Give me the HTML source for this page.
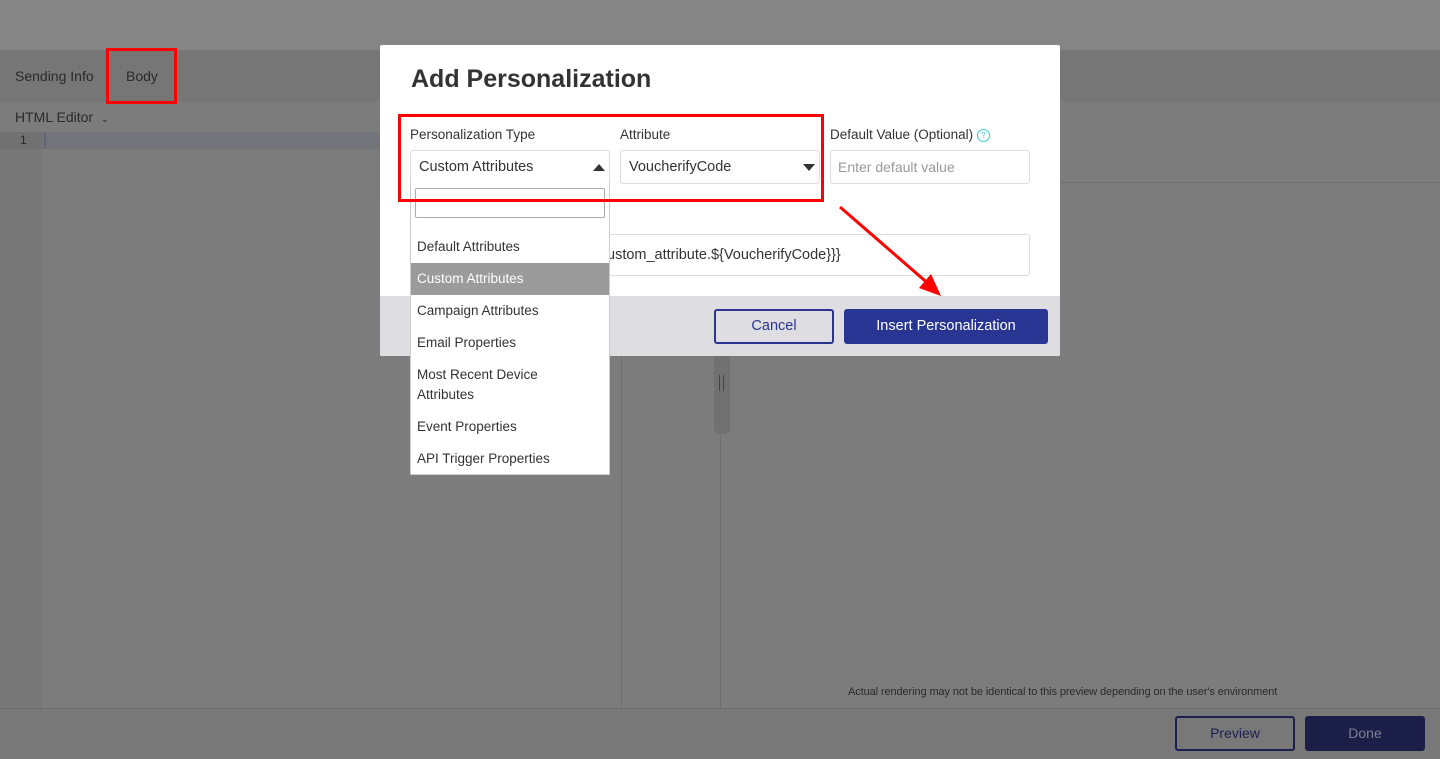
<!DOCTYPE html>
<html><head><meta charset="utf-8"><style>
*{box-sizing:border-box;margin:0;padding:0}
body{width:1440px;height:759px;position:relative;overflow:hidden;background:#7c7c7c;font-family:"Liberation Sans",sans-serif;color:#222}
.a{position:absolute}
</style></head><body>
<div class="a" style="left:0;top:0;width:1440px;height:50px;background:#858585"></div>
<div class="a" style="left:0;top:50px;width:1440px;height:52px;background:#767676"></div>
<div class="a" style="left:15px;top:68px;font-size:14px;color:#2a2a2a">Sending Info</div>
<div class="a" style="left:126px;top:68px;font-size:14px;color:#2a2a2a">Body</div>
<div class="a" style="left:106px;top:48px;width:71px;height:56px;border:3px solid #f00"></div>
<div class="a" style="left:15px;top:109px;font-size:14px;color:#2a2a2a">HTML Editor &nbsp;<span style="font-size:10px">⌄</span></div>
<div class="a" style="left:0;top:132px;width:42px;height:577px;background:#777"></div>
<div class="a" style="left:0;top:132px;width:42px;height:17px;background:#717171"></div>
<div class="a" style="left:42px;top:132px;width:580px;height:17px;background:#727479"></div>
<div class="a" style="left:44px;top:132px;width:2px;height:17px;background:#63666b"></div>
<div class="a" style="left:20px;top:133px;font-size:12px;color:#2a2a2a">1</div>
<div class="a" style="left:621px;top:340px;width:1px;height:369px;background:#6e6e6e"></div>
<div class="a" style="left:720px;top:182px;width:1px;height:527px;background:#6e6e6e"></div>
<div class="a" style="left:1060px;top:182px;width:380px;height:1px;background:#6e6e6e"></div>
<div class="a" style="left:714px;top:356px;width:16px;height:78px;background:#717171;border-radius:0 0 5px 5px"></div>
<div class="a" style="left:719px;top:375px;width:1px;height:16px;background:#444"></div>
<div class="a" style="left:723px;top:375px;width:1px;height:16px;background:#444"></div>
<div class="a" style="left:848px;top:686px;font-size:11px;color:#2a2a2a;letter-spacing:-0.1px">Actual rendering may not be identical to this preview depending on the user's environment</div>
<div class="a" style="left:0;top:708px;width:1440px;height:51px;background:#787878;border-top:1px solid #6c6c6c"></div>
<div class="a" style="left:1175px;top:716px;width:120px;height:35px;border:2px solid #1c2050;border-radius:3px;color:#1c2050;font-size:14px;text-align:center;line-height:31px">Preview</div>
<div class="a" style="left:1305px;top:716px;width:120px;height:35px;background:#1c2049;border-radius:3px;color:#7d7e95;font-size:14px;text-align:center;line-height:35px">Done</div>

<div class="a" style="left:380px;top:45px;width:680px;height:311px;background:#fff;border-radius:2px;overflow:hidden">
<div class="a" style="left:31px;top:20px;font-size:25px;font-weight:bold;color:#333">Add Personalization</div>
<div class="a" style="left:30px;top:82px;font-size:13.5px;color:#333">Personalization Type</div>
<div class="a" style="left:240px;top:82px;font-size:13.5px;color:#333">Attribute</div>
<div class="a" style="left:450px;top:82px;font-size:13.5px;color:#333">Default Value (Optional) <span style="display:inline-block;width:13px;height:13px;border:1px solid #3cc;border-radius:50%;font-size:8px;color:#3cc;text-align:center;line-height:11px;vertical-align:1px">?</span></div>
<div class="a" style="left:30px;top:105px;width:200px;height:34px;border:1px solid #ddd;border-radius:3px;font-size:14.5px;padding:0 8px;line-height:32px;color:#333">Custom Attributes<svg style="position:absolute;right:4px;top:13px" width="12" height="8"><polygon points="0,7 12,7 6,0" fill="#333"/></svg></div>
<div class="a" style="left:240px;top:105px;width:200px;height:34px;border:1px solid #ddd;border-radius:3px;font-size:14.5px;padding:0 8px;line-height:32px;color:#333">VoucherifyCode<svg style="position:absolute;right:4px;top:13px" width="12" height="8"><polygon points="0,0 12,0 6,7" fill="#333"/></svg></div>
<div class="a" style="left:450px;top:105px;width:200px;height:34px;border:1px solid #ddd;border-radius:3px;font-size:14px;padding:0 7px;line-height:32px;color:#999">Enter default value</div>
<div class="a" style="left:30px;top:189px;width:620px;height:42px;border:1px solid #ddd;border-radius:3px;font-size:14.5px;padding-left:196px;line-height:40px;color:#333">ustom_attribute.${VoucherifyCode}}}</div>
<div class="a" style="left:0;top:251px;width:680px;height:60px;background:#dedde2"></div>
<div class="a" style="left:334px;top:264px;width:120px;height:35px;border:2px solid #2a3590;border-radius:3px;color:#2a3590;font-size:14.5px;text-align:center;line-height:31px">Cancel</div>
<div class="a" style="left:464px;top:264px;width:204px;height:35px;background:#283592;border-radius:3px;color:#fff;font-size:14.5px;text-align:center;line-height:35px">Insert Personalization</div>
</div>

<div class="a" style="left:410px;top:182px;width:200px;height:293px;background:#fff;border:1px solid #ccc;border-top:none;font-size:13.5px;color:#333">
<div class="a" style="left:4px;top:6px;width:190px;height:30px;border:1px solid #aaa;border-radius:2px"></div>
<div class="a" style="left:6px;top:57px">Default Attributes</div>
<div class="a" style="left:0;top:81px;width:198px;height:32px;background:#9b9b9b"></div>
<div class="a" style="left:6px;top:89px;color:#fff">Custom Attributes</div>
<div class="a" style="left:6px;top:121px">Campaign Attributes</div>
<div class="a" style="left:6px;top:153px">Email Properties</div>
<div class="a" style="left:6px;top:183px;line-height:20px">Most Recent Device<br>Attributes</div>
<div class="a" style="left:6px;top:237px">Event Properties</div>
<div class="a" style="left:6px;top:269px">API Trigger Properties</div>
</div>

<div class="a" style="left:398px;top:114px;width:426px;height:88px;border:3px solid #f00"></div>
<svg class="a" style="left:835px;top:200px" width="110" height="100"><line x1="5" y1="7" x2="96" y2="86" stroke="#f00" stroke-width="3"/><polygon points="106,96 84,88 96,74" fill="#f00"/></svg>
</body></html>
